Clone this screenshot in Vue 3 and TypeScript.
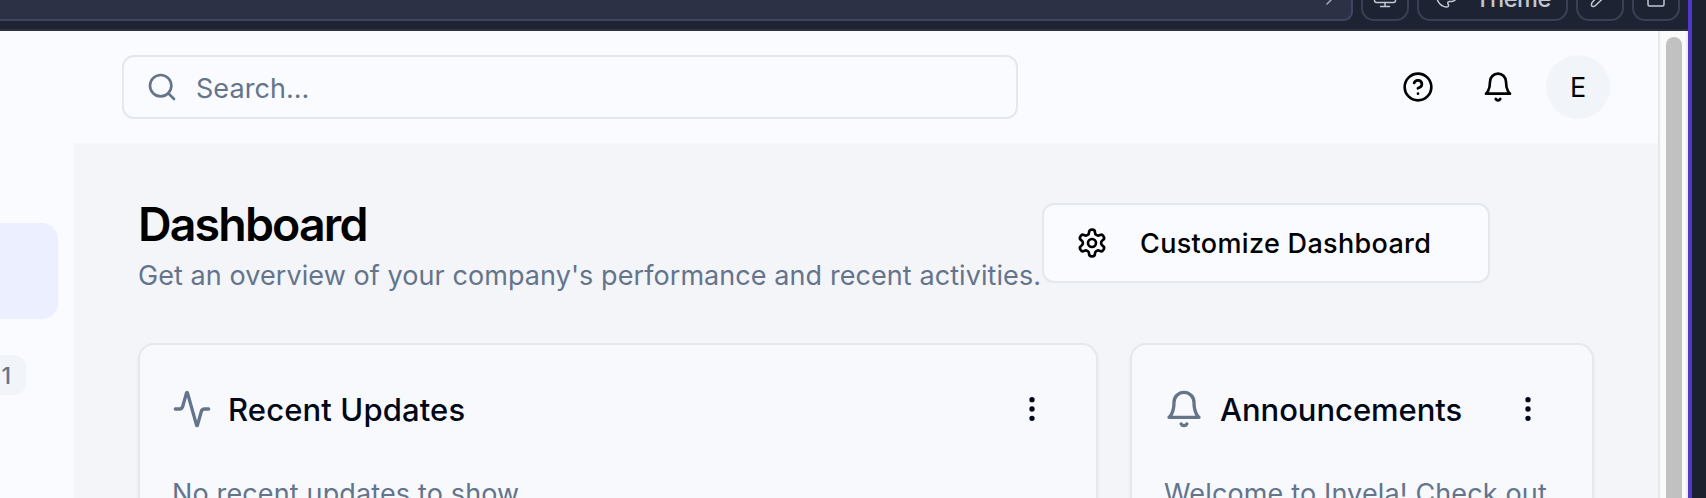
<script setup lang="ts">
interface Widget {
  id: 'updates' | 'announcements'
  title: string
  body: string
}

const widgets: Widget[] = [
  { id: 'updates', title: 'Recent Updates', body: 'No recent updates to show' },
  { id: 'announcements', title: 'Announcements', body: 'Welcome to Invela! Check out' },
]
</script>

<template>
  <div class="window">
    <div class="preview">
      <div class="toolbar">
        <div class="address">
          <svg class="i arrow" viewBox="0 0 24 24"><path d="M5 19 19 5" /></svg>
        </div>
        <div class="tool">
          <svg class="i" viewBox="0 0 24 24"><rect x="1.500" y="3" width="21" height="14.500" rx="2" /><path d="M7.500 21.500h9M12 17.500v4" /></svg>
        </div>
        <div class="tool theme">
          <svg class="i" viewBox="0 0 24 24"><path d="M12 2C6.500 2 2 6.500 2 12s4.500 10 10 10c.926 0 1.648-.746 1.648-1.688 0-.437-.18-.835-.437-1.125-.29-.289-.438-.652-.438-1.125a1.640 1.640 0 0 1 1.668-1.668h1.996c3.051 0 5.555-2.503 5.555-5.554C21.965 6.012 17.461 2 12 2z" /></svg>
          <span>Theme</span>
        </div>
        <div class="tool">
          <svg class="i" viewBox="0 0 24 24"><path d="M16.500 4a2.500 2.500 0 0 1 4 4L7.500 20.500C6.500 21.500 4.500 21.800 3.800 21S3.500 18 4.500 17Z" /></svg>
        </div>
        <div class="tool">
          <svg class="i" viewBox="0 0 24 24"><rect x="4" y="6" width="16" height="15" rx="1.500" /></svg>
        </div>
      </div>

      <div class="viewport">
        <div class="page">
          <aside class="sidebar">
            <div class="nav-active"></div>
            <span class="count">1</span>
          </aside>
          <div class="main">
            <header class="header">
              <div class="search">
                <svg class="i" viewBox="0 0 24 24"><circle cx="11" cy="11" r="8" /><path d="m21 21-4.300-4.300" /></svg>
                <span>Search...</span>
              </div>
              <div class="actions">
                <svg class="i" viewBox="0 0 24 24"><circle cx="12" cy="12" r="10" /><path d="M9.090 9a3 3 0 0 1 5.830 1c0 2-3 3-3 3M12 17h.01" /></svg>
                <svg class="i" viewBox="0 0 24 24"><path d="M6 8a6 6 0 0 1 12 0c0 7 3 9 3 9H3s3-2 3-9M10.300 21a1.940 1.940 0 0 0 3.400 0" /></svg>
                <div class="avatar">E</div>
              </div>
            </header>
            <main class="content">
              <div class="heading">
                <div>
                  <h1>Dashboard</h1>
                  <p class="subtitle">Get an overview of your company's performance and recent activities.</p>
                </div>
                <button class="customize">
                  <svg class="i" viewBox="0 0 24 24"><path d="M12.220 2h-.44a2 2 0 0 0-2 2v.18a2 2 0 0 1-1 1.730l-.43.25a2 2 0 0 1-2 0l-.15-.08a2 2 0 0 0-2.730.73l-.22.38a2 2 0 0 0 .73 2.730l.15.1a2 2 0 0 1 1 1.720v.51a2 2 0 0 1-1 1.740l-.15.09a2 2 0 0 0-.73 2.730l.22.38a2 2 0 0 0 2.730.73l.15-.08a2 2 0 0 1 2 0l.43.25a2 2 0 0 1 1 1.730V20a2 2 0 0 0 2 2h.44a2 2 0 0 0 2-2v-.18a2 2 0 0 1 1-1.730l.43-.25a2 2 0 0 1 2 0l.15.08a2 2 0 0 0 2.730-.73l.22-.39a2 2 0 0 0-.73-2.730l-.15-.08a2 2 0 0 1-1-1.740v-.5a2 2 0 0 1 1-1.740l.15-.09a2 2 0 0 0 .73-2.730l-.22-.38a2 2 0 0 0-2.730-.73l-.15.08a2 2 0 0 1-2 0l-.43-.25a2 2 0 0 1-1-1.730V4a2 2 0 0 0-2-2z" /><circle cx="12" cy="12" r="3" /></svg>
                  <span>Customize Dashboard</span>
                </button>
              </div>
              <div class="cards">
                <section v-for="w in widgets" :key="w.id" class="card">
                  <div class="card-head">
                    <svg v-if="w.id === 'updates'" class="i lead" viewBox="0 0 24 24"><path d="M22 12h-2.480a2 2 0 0 0-1.930 1.460l-2.350 8.360a.25.25 0 0 1-.48 0L9.240 2.180a.25.25 0 0 0-.48 0l-2.350 8.360A2 2 0 0 1 4.490 12H2" /></svg>
                    <svg v-else class="i lead" viewBox="0 0 24 24"><path d="M6 8a6 6 0 0 1 12 0c0 7 3 9 3 9H3s3-2 3-9M10.300 21a1.940 1.940 0 0 0 3.400 0" /></svg>
                    <h2 :class="w.id">{{ w.title }}</h2>
                    <svg class="i more" viewBox="0 0 24 24"><circle cx="12" cy="5" r="1" /><circle cx="12" cy="12" r="1" /><circle cx="12" cy="19" r="1" /></svg>
                  </div>
                  <p>{{ w.body }}</p>
                </section>
              </div>
            </main>
          </div>
        </div>
        <div class="track"><div class="thumb"></div></div>
      </div>
    </div>
  </div>
</template>

<style>
body { margin: 0; overflow: hidden; }
</style>

<style scoped>
* { box-sizing: border-box; }
h1, h2, p { margin: 0; }
.window {
  width: 1706px; height: 498px; overflow: hidden; background: #1c2130;
  font-family: Inter, "Liberation Sans", sans-serif;
}
.preview { width: 1692px; height: 498px; border-right: 4px solid #4f39c8; display: flex; flex-direction: column; }
.i { fill: none; stroke: currentColor; stroke-width: 2; stroke-linecap: round; stroke-linejoin: round; width: 32px; height: 32px; flex: none; display: block; }

.toolbar {
  height: 31px; flex: none; background: #1e2333; border-bottom: 2px solid #2f2f42;
  display: flex; align-items: flex-end; gap: 8px; padding: 0 8px 8px 0; overflow: hidden;
}
.address {
  flex: 1; height: 48px; background: #2d3145; border: 2px solid #41455f; border-left: 0;
  border-radius: 0 0 9px 0; display: flex; justify-content: flex-end; align-items: center; padding-right: 5px;
}
.tool {
  width: 48px; height: 48px; flex: none; border: 2px solid #3b3f56; border-radius: 13px; color: #c3c7d0;
  display: flex; align-items: center; justify-content: center;
}
.tool .i, .address .i { width: 24px; height: 24px; stroke-width: 1.500; }
.address .i { color: #a5a7b0; }
.theme { width: 151px; gap: 16px; padding-left: 1px; font-size: 23.500px; font-weight: 500; letter-spacing: -.4px; }
.theme span { padding-top: 3px; }

.viewport { flex: 1; min-height: 0; display: flex; }
.page { width: 1658px; flex: none; display: flex; background: #f9fbff; overflow: hidden; }
.track { width: 30px; background: #fafafa; border-left: 2px solid #e8e8e8; border-right: 2px solid #ededed; padding: 6px 6px 0; overflow: hidden; }
.thumb { height: 600px; width: 16px; background: #c1c1c1; border-radius: 8px; }

.sidebar { width: 74px; flex: none; padding-top: 192px; }
.nav-active { width: 58px; height: 96px; background: #ebefff; border-radius: 0 16px 16px 0; }
.count {
  display: flex; align-items: center; justify-content: flex-end; margin-top: 36px; width: 26px; height: 40px; padding: 2px 15px 0 0;
  background: #f1f5f9; border-radius: 0 12px 12px 0; color: #64748b; font-size: 23px; font-weight: 500;
}
.main { flex: 1; min-width: 0; }
.header { height: 112px; display: flex; align-items: center; justify-content: space-between; padding: 0 48px; }
.search {
  width: 896px; height: 64px; border: 2px solid #e2e8ee; border-radius: 12px; background: #fafbff;
  display: flex; align-items: center; padding-left: 22px; gap: 18px; color: #64748b; font-size: 27px; letter-spacing: .05px;
}
.search span { padding-top: 3px; }
.actions { display: flex; align-items: center; gap: 48px; color: #000; }
.avatar { width: 64px; height: 64px; padding-top: 1px; margin-left: -16px; border-radius: 50%; background: #f1f5f9; font-size: 27px; display: flex; align-items: center; justify-content: center; }

.content { height: 500px; background: #f4f5f9; padding: 60px 64px 0; }
.heading { display: flex; height: 140px; align-items: flex-start; }
.heading > div { width: 904px; flex: none; white-space: nowrap; }
h1 { font-size: 46.500px; line-height: 42px; font-weight: 600; letter-spacing: -1.850px; color: #000; }
.subtitle { margin-top: 11px; line-height: 40px; font-size: 27px; letter-spacing: .075px; color: #64748b; }
.customize {
  width: 448px; height: 80px; border: 2px solid #e2e8ee; border-radius: 12px; background: #fafbff; color: #000;
  font: 500 27px Inter, sans-serif; letter-spacing: .33px; display: flex; align-items: center; gap: 32px; padding: 0 0 0 32px; white-space: nowrap;
}
.customize span { padding-top: 1px; }
.cards { display: grid; grid-template-columns: 960px 464px; gap: 32px; }
.card { height: 300px; border: 2px solid #e2e8ee; border-radius: 16px; background: #f7f9fd; padding: 32px 32px 0; box-shadow: 0 2px 4px rgba(0, 0, 0, .04); white-space: nowrap; }
.card-head { display: flex; align-items: center; height: 64px; }
.lead { width: 40px; height: 40px; color: #64748b; }
h2 { flex: 1; margin-left: 16px; font-size: 31px; font-weight: 500; color: #020817; }
h2.updates { letter-spacing: .13px; }
h2.announcements { letter-spacing: -.04px; }
.more { margin-right: 16px; color: #020817; }
.card p { margin-top: 33px; line-height: 40px; font-size: 27px; letter-spacing: .14px; color: #64748b; }
</style>
